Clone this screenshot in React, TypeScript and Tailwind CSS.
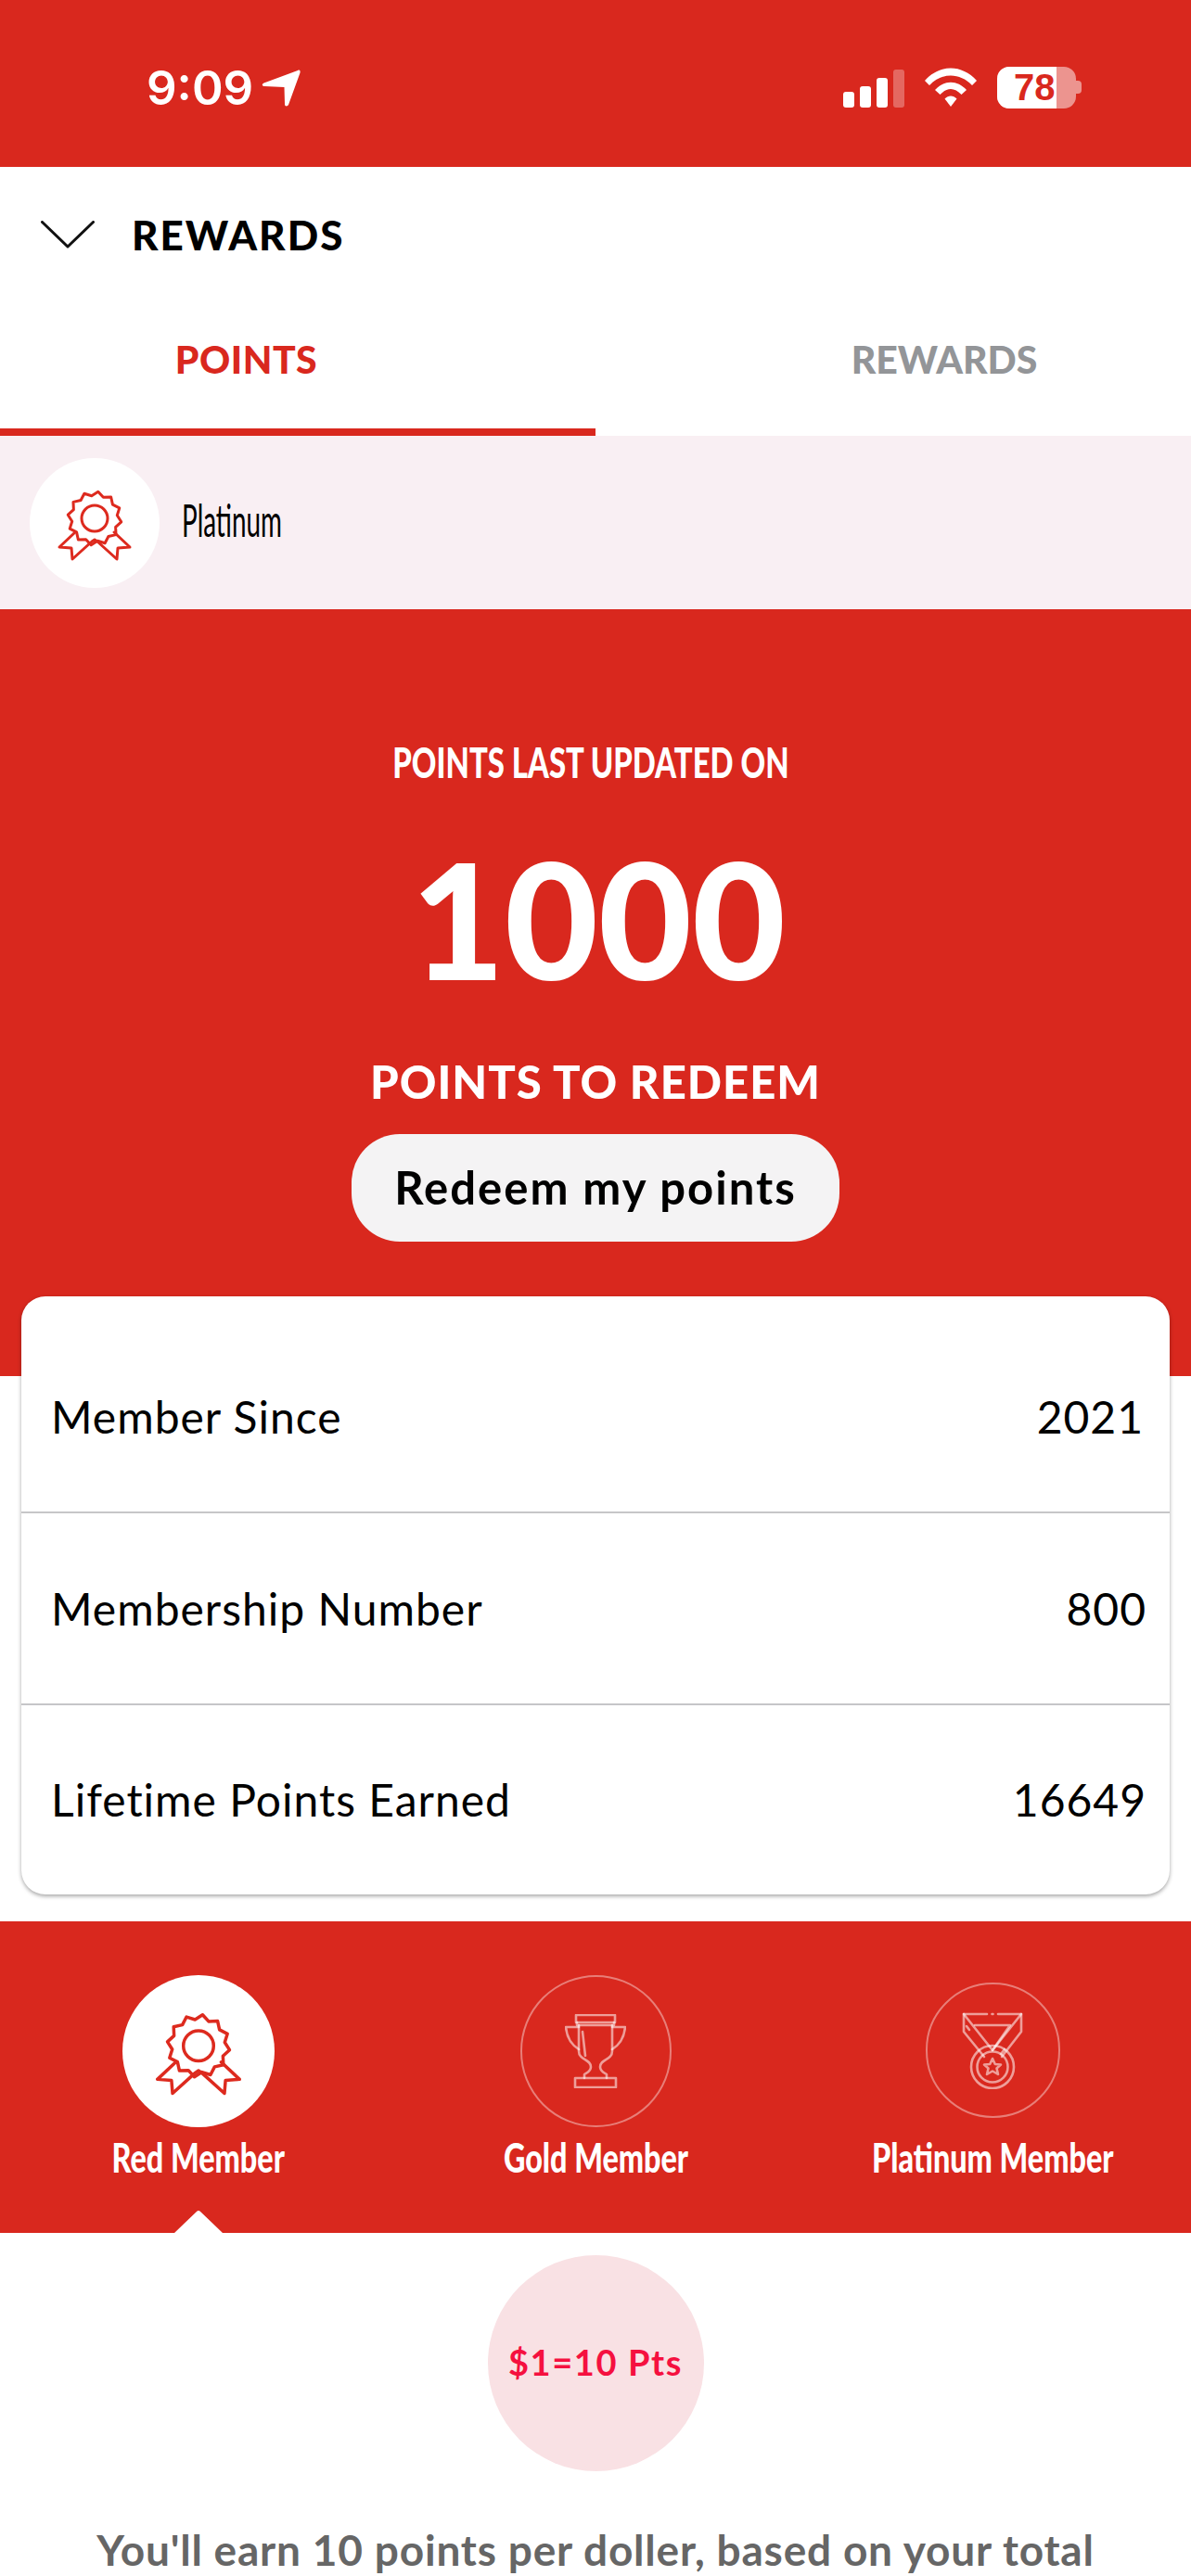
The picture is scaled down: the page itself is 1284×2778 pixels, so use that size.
import React from "react";

const sealPoints = (() => {
  const pts: string[] = [];
  for (let i = 0; i < 24; i++) {
    const a = (i * Math.PI) / 12 - Math.PI / 2 + Math.PI / 24;
    const r = i % 2 === 0 ? 29 : 24.5;
    pts.push(`${(r * Math.cos(a)).toFixed(2)},${(r * Math.sin(a)).toFixed(2)}`);
  }
  return pts.join(" ");
})();

function Rosette({ className }: { className?: string }) {
  return (
    <svg viewBox="-41 -32 82 79" className={className} fill="none" stroke="#dd2a1e" strokeWidth="3" strokeLinejoin="round" strokeLinecap="round">
      <polygon points={sealPoints} />
      <circle cx="0" cy="0" r="14" />
      <path d="M-21 15 L-38 31 L-25 32 L-24 44 L-3 25 L0 23 L3 25 L24 44 L25 32 L38 31 L21 15" />
    </svg>
  );
}

function Trophy({ className }: { className?: string }) {
  return (
    <svg viewBox="0 0 66 80" className={className} fill="none" stroke="#fff" strokeOpacity="0.55" strokeWidth="2.6" strokeLinejoin="round" strokeLinecap="round">
      <rect x="12" y="1" width="42" height="8" />
      <path d="M13 9 V12 H53 V9" />
      <path d="M15 12 V40 C15 50 28 48 28 57 C28 62 24 63 21 65 V69" />
      <path d="M51 12 V40 C51 50 38 48 38 57 C38 62 42 63 45 65 V69" />
      <path d="M15 14 H1 C2 25 7 33 15 38" />
      <path d="M51 14 H65 C64 25 59 33 51 38" />
      <rect x="11" y="69" width="44" height="10" />
      <path d="M19 19 L22 45" />
    </svg>
  );
}

function Medal({ className }: { className?: string }) {
  return (
    <svg viewBox="0 0 66 84" className={className} fill="none" stroke="#fff" strokeOpacity="0.55" strokeWidth="2.6" strokeLinejoin="round" strokeLinecap="round">
      <path d="M27 3 H2 V22 L24 49" />
      <path d="M39 3 H64 V22 L43 49" />
      <path d="M32.5 3 H33.5" />
      <path d="M2 3 L33 42 L64 3" />
      <path d="M14 15 H52 L33 42" />
      <path d="M5 16 L8 20" />
      <path d="M46 41 L42 46" />
      <circle cx="33" cy="60" r="23" />
      <circle cx="33" cy="60" r="16.5" />
      <path d="M33 51 L35.8 57 L42 57.5 L37.5 61.5 L39 68 L33 64.5 L27 68 L28.5 61.5 L24 57.5 L30.2 57 Z" />
    </svg>
  );
}

function Row({ label, value, pr }: { label: string; value: string; pr: string }) {
  return (
    <div className={`flex items-center justify-between pl-8 h-[206px] ${pr}`}>
      <span>{label}</span>
      <span>{value}</span>
    </div>
  );
}

function StatusBar() {
  return (
    <div className="h-[180px] bg-[#d9281e] flex justify-between items-start text-white pl-[158px] pr-[118px] pt-[71px] font-['Inter',sans-serif]">
      <div className="flex items-center gap-[9px]">
        <span className="text-[51px] leading-[48px] font-semibold">9:09</span>
        <svg viewBox="0 0 42 42" className="w-[42px] h-[42px]" fill="#fff">
          <path d="M39 2 C41 1 42 2 41.5 4.5 L29 39 C28 41 25 41 25 38.5 L24.5 20 L3 19 C0.5 19 0 16.5 2.5 15.5 Z" />
        </svg>
      </div>
      <div className="flex items-center gap-[22px] h-[46px]">
        <div className="flex items-end gap-[6px] h-[41px] mt-[2px]">
          <div className="w-[12px] h-[17px] rounded-[3px] bg-white" />
          <div className="w-[12px] h-[23px] rounded-[3px] bg-white" />
          <div className="w-[12px] h-[32px] rounded-[3px] bg-white" />
          <div className="w-[12px] h-[41px] rounded-[3px] bg-white/30" />
        </div>
        <svg viewBox="0 0 56 42" className="w-[56px] h-[42px]" fill="#fff">
          <path d="M0 14 C16 -4 40 -4 56 14 L51 19 C38 5 18 5 5 19 Z" />
          <path d="M11 24 C21 13 35 13 45 24 L39.5 29 C32 21 24 21 16.5 29 Z" />
          <path d="M21.5 33.5 C25.5 29.5 30.5 29.5 34.5 33.5 L28 42 Z" />
        </svg>
        <div className="flex items-center">
          <div className="relative w-[85px] h-[45px] rounded-[13px] bg-white/50 overflow-hidden">
            <div className="w-[64px] h-full bg-white" />
            <span className="absolute left-[18px] top-0 h-full flex items-center text-[40px] font-semibold text-[#d9281e] font-['Liberation_Sans',sans-serif]">78</span>
          </div>
          <div className="w-[6px] h-[14px] rounded-r-[4px] bg-white/50" />
        </div>
      </div>
    </div>
  );
}

export default function App() {
  return (
    <div className="w-[1284px] h-[2778px] overflow-hidden bg-white font-['Lato',sans-serif] text-black">
      <StatusBar />

      <div className="h-[146px] flex items-center pl-[44px] gap-[40px]">
        <svg viewBox="0 0 58 30" className="w-[58px] h-[30px]" fill="none" stroke="#111" strokeWidth="3" strokeLinecap="round" strokeLinejoin="round">
          <path d="M1.5 1.5 L29 28 L56.5 1.5" />
        </svg>
        <span className="text-[44px] leading-none font-black tracking-[2px]">REWARDS</span>
      </div>

      <div className="h-[144px] flex">
        <div className="w-[642px] h-full border-b-[8px] border-[#d9281e] flex items-center justify-center pb-[14px] pr-[111px]">
          <span className="text-[41px] leading-none font-black text-[#d9281e] tracking-[0.5px]">POINTS</span>
        </div>
        <div className="w-[642px] h-full flex items-center justify-center pb-[22px] pl-[110px]">
          <span className="text-[41px] leading-none font-black text-[#939598]">REWARDS</span>
        </div>
      </div>

      <div className="h-[187px] bg-[#f9eff3] flex items-center pl-[32px] gap-[24px]">
        <div className="w-[140px] h-[140px] rounded-full bg-white flex items-center justify-center">
          <Rosette className="w-[82px] h-[79px] mt-[6px]" />
        </div>
        <span className="mb-[6px] text-[48px] leading-none font-normal whitespace-nowrap origin-left scale-x-[0.58]">Platinum</span>
      </div>

      <div className="h-[827px] bg-[#d9281e] text-white flex flex-col items-center">
        <div className="mt-[145px] mr-[10px] text-[46px] leading-[40px] font-black whitespace-nowrap scale-x-[0.715]">POINTS LAST UPDATED ON</div>
        <div className="mt-[64px] ml-[6px] text-[174px] leading-[168px] font-black">1000</div>
        <div className="mt-[67px] text-[49px] leading-[50px] font-black tracking-[1px]">POINTS TO REDEEM</div>
        <div className="mt-[32px] w-[526px] h-[116px] rounded-[52px] bg-[#f4f3f4] text-black flex items-center justify-center text-[49px] font-bold tracking-[2px]">
          Redeem my points
        </div>
      </div>

      <div className="mx-[23px] -mt-[86px] relative h-[645px] bg-white rounded-[26px] shadow-[0_2px_4px_rgba(0,0,0,0.35)] text-[48px] leading-none tracking-[1px] flex flex-col justify-between pt-[28px]">
        <Row label="Member Since" value="2021" pr="pr-[28px]" />
        <div className="h-[2px] bg-[#c6c6c8]" />
        <Row label="Membership Number" value="800" pr="pr-[25px]" />
        <div className="h-[2px] bg-[#c6c6c8]" />
        <Row label="Lifetime Points Earned" value="16649" pr="pr-[25px]" />
      </div>

      <div className="mt-[29px] h-[336px] bg-[#d9281e] relative grid grid-cols-3 text-white">
        <div className="flex flex-col items-center pt-[58px]">
          <div className="w-[164px] h-[164px] rounded-full bg-white flex items-center justify-center">
            <Rosette className="w-[96px] h-[92px] mt-[6px]" />
          </div>
          <span className="mt-[12px] text-[44px] leading-[40px] font-black whitespace-nowrap scale-x-[0.735]">Red Member</span>
        </div>
        <div className="flex flex-col items-center pt-[58px]">
          <div className="w-[163px] h-[164px] rounded-full border-2 border-white/40 flex items-center justify-center">
            <Trophy className="w-[66px] h-[80px]" />
          </div>
          <span className="mt-[12px] text-[44px] leading-[40px] font-black whitespace-nowrap scale-x-[0.735]">Gold Member</span>
        </div>
        <div className="flex flex-col items-center pt-[66px]">
          <div className="w-[145px] h-[146px] rounded-full border-2 border-white/40 flex items-center justify-center">
            <Medal className="w-[66px] h-[84px]" />
          </div>
          <span className="mt-[22px] text-[44px] leading-[40px] font-black whitespace-nowrap scale-x-[0.735]">Platinum Member</span>
        </div>
        <svg viewBox="0 0 52 24" className="absolute left-[188px] bottom-0 w-[52px] h-[24px]" fill="#fff">
          <path d="M0 24 L24 1 Q26 -1 28 1 L52 24 Z" />
        </svg>
      </div>

      <div className="flex flex-col items-center">
        <div className="mt-[24px] w-[233px] h-[233px] rounded-full bg-[#f9e1e4] flex items-center justify-center text-[38px] font-bold tracking-[1.6px] text-[#f5103f] pb-[2px]">
          $1=10 Pts
        </div>
        <div className="mt-[58px] text-[46px] leading-[54px] font-bold tracking-[0.8px] text-[#666666] whitespace-nowrap">
          You'll earn 10 points per doller, based on your total
        </div>
      </div>
    </div>
  );
}
